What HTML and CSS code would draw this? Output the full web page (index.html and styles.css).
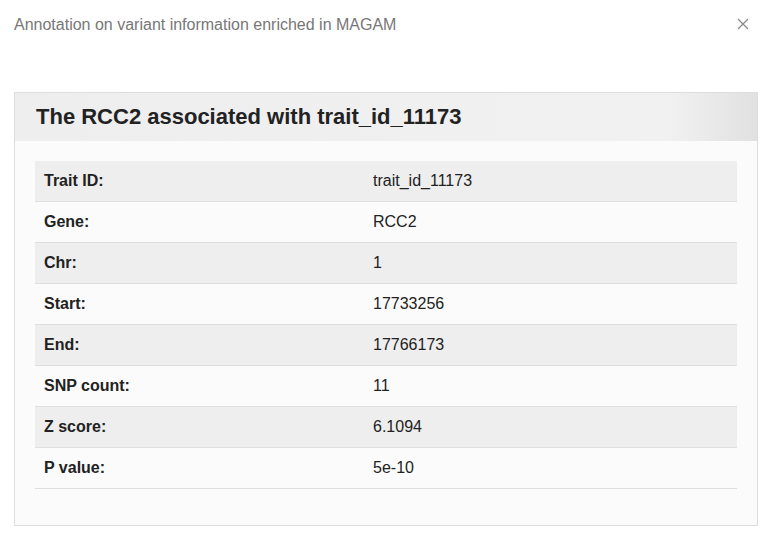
FILE: index.html
```html
<!DOCTYPE html>
<html>
<head>
<meta charset="utf-8">
<link rel="stylesheet" href="styles.css">
</head>
<body>
<div class="modal">
  <div class="modal-header">
    <h4 class="modal-title">Annotation on variant information enriched in MAGAM</h4>
    <button class="close" aria-label="Close">
      <svg width="12" height="12" viewBox="0 0 12 12"><path d="M1 1L11 11M11 1L1 11" stroke="#8a8a8a" stroke-width="1.3" fill="none"/></svg>
    </button>
  </div>
  <div class="panel">
    <div class="panel-heading">
      <h3>The RCC2 associated with trait_id_11173</h3>
    </div>
    <div class="panel-body">
      <table class="info">
        <colgroup><col class="c-label"><col></colgroup>
        <tr><th>Trait ID:</th><td>trait_id_11173</td></tr>
        <tr><th>Gene:</th><td>RCC2</td></tr>
        <tr><th>Chr:</th><td>1</td></tr>
        <tr><th>Start:</th><td>17733256</td></tr>
        <tr><th>End:</th><td>17766173</td></tr>
        <tr><th>SNP count:</th><td>11</td></tr>
        <tr><th>Z score:</th><td>6.1094</td></tr>
        <tr><th>P value:</th><td>5e-10</td></tr>
      </table>
    </div>
  </div>
</div>
</body>
</html>
```
FILE: styles.css
```css
html, body {
  margin: 0;
  padding: 0;
  background: #fff;
  font-family: "Liberation Sans", Arial, sans-serif;
  color: #222;
}
.modal {
  width: 768px;
  height: 538px;
  box-sizing: border-box;
  padding: 0 10px 0 14px;
}
.modal-header {
  display: flex;
  justify-content: space-between;
  align-items: center;
  height: 48px;
}
.modal-title {
  margin: 0;
  padding-top: 2px;
  font-size: 16px;
  font-weight: normal;
  color: #777;
}
.close {
  border: 0;
  background: none;
  padding: 0;
  margin-right: 9px;
  width: 12px;
  height: 12px;
  display: flex;
}
.panel {
  margin-top: 44px;
  border: 1px solid #ddd;
  background: #fbfbfb;
}
.panel-heading {
  height: 48px;
  display: flex;
  align-items: center;
  padding: 0 21px;
  background: linear-gradient(to right, #eeeeee 0%, #f1f1f1 88%, #e1e1e1 100%);
}
.panel-heading h3 {
  margin: 0;
  font-size: 22px;
  font-weight: bold;
  color: #222;
}
.panel-body {
  padding: 20px 20px 36px 20px;
}
.info {
  width: 100%;
  border-collapse: collapse;
  table-layout: fixed;
  font-size: 16px;
}
.c-label {
  width: 329px;
}
.info th, .info td {
  height: 40px;
  padding: 0 9px;
  text-align: left;
  border-bottom: 1px solid #dedfe3;
  vertical-align: middle;
}
.info th {
  font-weight: bold;
}
.info td {
  font-weight: normal;
}
.info tr:nth-child(odd) {
  background: #eeeeee;
}
.info tr:nth-child(even) {
  background: #fbfbfb;
}
```
